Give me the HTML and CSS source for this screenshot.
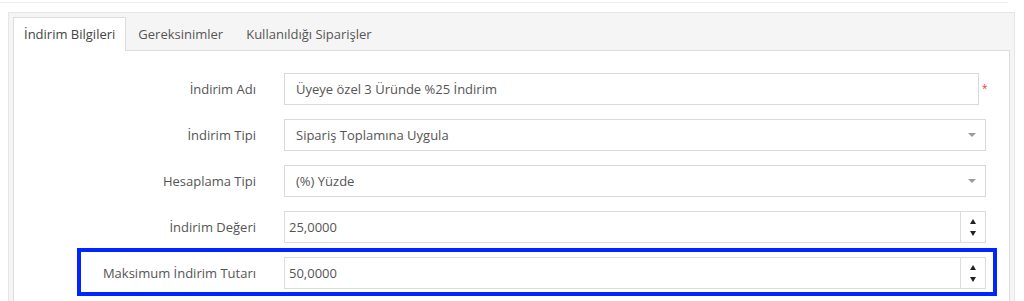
FILE: index.html
```html
<!DOCTYPE html>
<html lang="tr">
<head>
<meta charset="utf-8">
<link rel="stylesheet" href="styles.css">
</head>
<body>
<div class="topline"></div>
<div class="panel">
  <ul class="tabs">
    <li class="tab active">İndirim Bilgileri</li>
    <li class="tab">Gereksinimler</li>
    <li class="tab">Kullanıldığı Siparişler</li>
  </ul>
  <div class="pane">
    <div class="row">
      <label class="label">İndirim Adı</label>
      <div class="field text short">Üyeye özel 3 Üründe %25 İndirim</div>
      <span class="req">*</span>
    </div>
    <div class="row">
      <label class="label">İndirim Tipi</label>
      <div class="field text select">Sipariş Toplamına Uygula<span class="caret"></span></div>
    </div>
    <div class="row">
      <label class="label">Hesaplama Tipi</label>
      <div class="field text select">(%) Yüzde<span class="caret"></span></div>
    </div>
    <div class="row">
      <label class="label">İndirim Değeri</label>
      <div class="field num"><span class="val">25,0000</span><span class="spin"><span class="up"></span><span class="down"></span></span></div>
    </div>
    <div class="row">
      <label class="label">Maksimum İndirim Tutarı</label>
      <div class="field num"><span class="val">50,0000</span><span class="spin"><span class="up"></span><span class="down"></span></span></div>
    </div>
  </div>
</div>
<div class="highlight"></div>
</body>
</html>
```
FILE: styles.css
```css
html, body {
  margin: 0;
  padding: 0;
  background: #fff;
  font-family: "Open Sans", "Noto Sans", sans-serif;
  font-size: 13px;
  color: #555;
  height: 301px;
  overflow: hidden;
}
.topline {
  width: 1008px;
  height: 2px;
  border-bottom: 1px solid #ededed;
}
.panel {
  box-sizing: border-box;
  margin: 9px 0 0 8px;
  width: 1007px;
  height: 289px;
  overflow: hidden;
  background: #f5f5f5;
  border: 1px solid #e6e6e6;
  border-bottom: none;
  padding: 4px 4px 0 4px;
}
.tabs {
  list-style: none;
  margin: 0;
  padding: 0;
  display: flex;
  border-bottom: 1px solid #ddd;
  height: 33px;
}
.tab {
  height: 32px;
  line-height: 32px;
  padding: 0 10px;
  margin-right: 1px;
  border: 1px solid transparent;
  border-bottom: none;
  color: #555;
}
.tab.active {
  background: #fff;
  border-color: #ddd;
  height: 33px;
  color: #444;
}
.pane {
  background: #fff;
  border: 1px solid #ddd;
  border-top: none;
  padding-top: 22px;
  height: 240px;
  display: flex;
  flex-direction: column;
  gap: 14px;
}
.row {
  display: grid;
  grid-template-columns: 242px 702px 10px;
  column-gap: 28px;
  align-items: center;
  height: 32px;
}
.label {
  text-align: right;
  color: #555;
  white-space: nowrap;
}
.field {
  box-sizing: border-box;
  height: 32px;
  border: 1px solid #d6dadf;
  display: flex;
  align-items: center;
  color: #555;
  position: relative;
}
.field.text {
  padding-left: 11px;
}
.field.short {
  width: 695px;
}
.req {
  color: #e8403a;
  font-size: 10px;
  margin-left: -32px;
  margin-top: -2px;
}
.caret {
  position: absolute;
  right: 9px;
  top: 13px;
  width: 0;
  height: 0;
  border-left: 4px solid transparent;
  border-right: 4px solid transparent;
  border-top: 4px solid #9a9a9a;
}
.field.num {
  border-color: #dcdcdc;
  padding-left: 4px;
}
.val {
  flex: 1;
}
.spin {
  width: 24px;
  height: 100%;
  border-left: 1px solid #dcdcdc;
  display: flex;
  flex-direction: column;
  align-items: center;
  justify-content: center;
  gap: 7px;
}
.up {
  width: 0;
  height: 0;
  border-left: 3.5px solid transparent;
  border-right: 3.5px solid transparent;
  border-bottom: 5px solid #222;
}
.down {
  width: 0;
  height: 0;
  border-left: 3.5px solid transparent;
  border-right: 3.5px solid transparent;
  border-top: 5px solid #222;
}
.highlight {
  position: absolute;
  left: 77px;
  top: 248px;
  width: 920px;
  height: 48px;
  box-sizing: border-box;
  border: 4px solid #0026ff;
}
```
